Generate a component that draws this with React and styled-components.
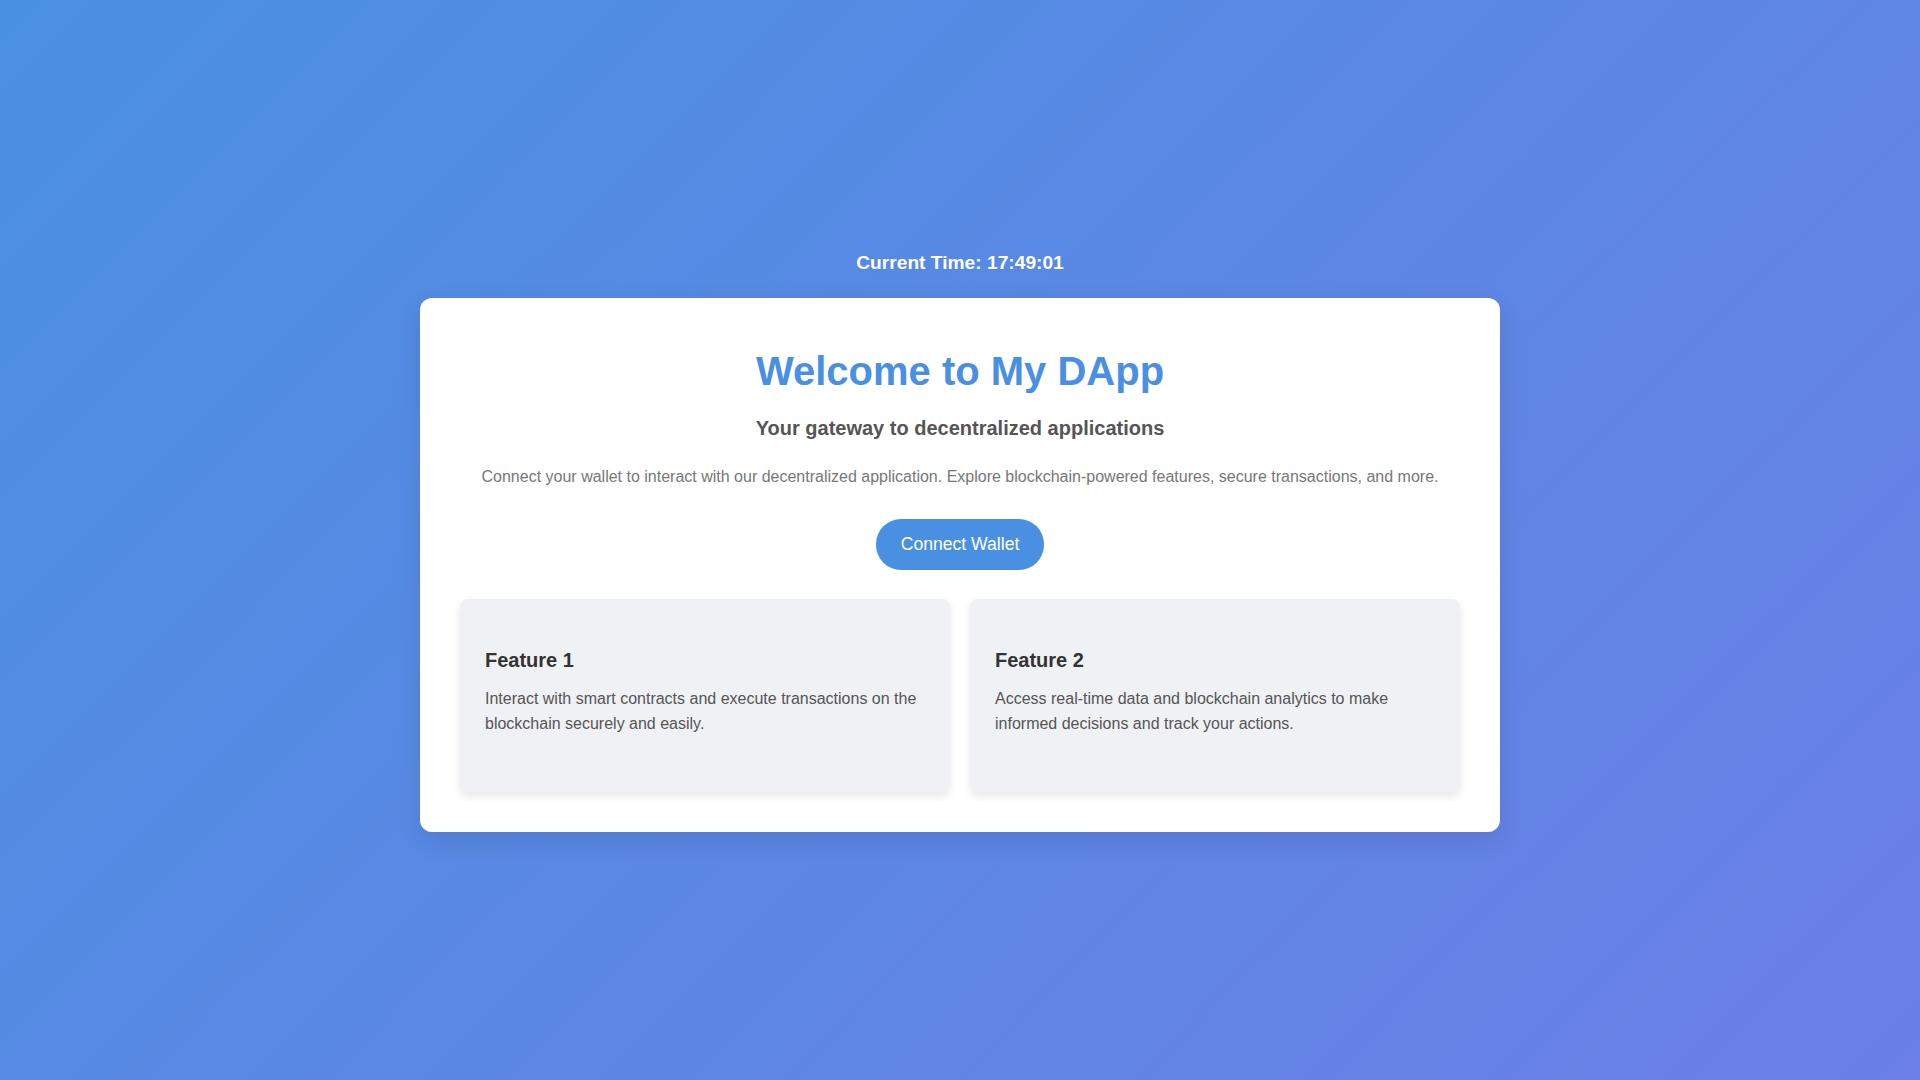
import React, { useEffect, useState } from "react";
import styled, { createGlobalStyle } from "styled-components";

const GlobalStyle = createGlobalStyle`
  * {
    box-sizing: border-box;
  }

  body {
    margin: 0;
    font-family: "Liberation Sans", Arial, sans-serif;
    line-height: 1.6;
    color: #333;
  }
`;

const features = [
  {
    title: "Feature 1",
    text: "Interact with smart contracts and execute transactions on the blockchain securely and easily.",
  },
  {
    title: "Feature 2",
    text: "Access real-time data and blockchain analytics to make informed decisions and track your actions.",
  },
];

const App = () => {
  const [time] = useState("17:49:01");

  useEffect(() => {
    document.title = "My DApp";
  }, []);

  return (
    <>
      <GlobalStyle />
      <Page>
        <Clock>Current Time: {time}</Clock>
        <Card>
          <Title>Welcome to My DApp</Title>
          <Subtitle>Your gateway to decentralized applications</Subtitle>
          <Intro>
            Connect your wallet to interact with our decentralized application.
            Explore blockchain-powered features, secure transactions, and more.
          </Intro>
          <ConnectButton type="button">Connect Wallet</ConnectButton>
          <FeatureGrid>
            {features.map((f) => (
              <FeatureCard key={f.title}>
                <h3>{f.title}</h3>
                <p>{f.text}</p>
              </FeatureCard>
            ))}
          </FeatureGrid>
        </Card>
      </Page>
    </>
  );
};

export default App;

const Page = styled.div`
  min-height: 100vh;
  display: flex;
  flex-direction: column;
  align-items: center;
  justify-content: center;
  background: linear-gradient(135deg, #4a90e2 0%, #6b7fe6 100%);
`;

const Clock = styled.div`
  color: #fff;
  font-size: 19.2px;
  font-weight: bold;
  margin-bottom: 19px;
`;

const Card = styled.div`
  width: 1080px;
  padding: 40px;
  background: #fff;
  border-radius: 12px;
  box-shadow: 0 8px 24px rgba(0, 0, 0, 0.1);
  text-align: center;
`;

const Title = styled.h1`
  margin: 1px 0 9px;
  font-size: 40px;
  color: #4a90e2;
`;

const Subtitle = styled.h2`
  margin: 0 0 20px;
  font-size: 20px;
  color: #555;
`;

const Intro = styled.p`
  margin: 0 0 29px;
  font-size: 16px;
  color: #777;
`;

const ConnectButton = styled.button`
  display: inline-block;
  padding: 15px 25px;
  border: none;
  border-radius: 25px;
  background: #4a90e2;
  color: #fff;
  font-family: inherit;
  font-size: 17.6px;
  cursor: pointer;
  margin-bottom: 29px;
`;

const FeatureGrid = styled.div`
  display: grid;
  grid-template-columns: 1fr 1fr;
  gap: 20px;
  text-align: left;
`;

const FeatureCard = styled.div`
  background: #f0f1f5;
  border-radius: 8px;
  padding: 50px 25px 55px;
  box-shadow: 0 4px 8px rgba(0, 0, 0, 0.1);

  h3 {
    margin: 0 0 14px;
    font-size: 20px;
    line-height: 23px;
    color: #333;
  }

  p {
    margin: 0;
    font-size: 16px;
    color: #555;
  }
`;
